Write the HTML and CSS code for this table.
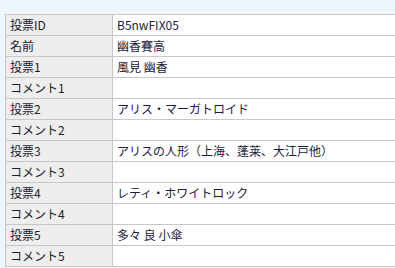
FILE: index.html
```html
<!DOCTYPE html>
<html>
<head>
 <meta charset="utf-8"/>
 <title>投票</title>
<link rel="stylesheet" href="styles.css">
</head>
<body>
<table class="vote">
<tr> <th>投票ID</th> <td>B5nwFIX05</td> </tr>
<tr> <th>名前</th> <td>幽香賽高</td> </tr>
<tr> <th>投票1</th> <td>風見 幽香</td> </tr>
<tr> <th>コメント1</th> <td></td> </tr>
<tr> <th>投票2</th> <td>アリス・マーガトロイド</td> </tr>
<tr> <th>コメント2</th> <td></td> </tr>
<tr> <th>投票3</th> <td>アリスの人形（上海、蓬莱、大江戸他）</td> </tr>
<tr> <th>コメント3</th> <td></td> </tr>
<tr> <th>投票4</th> <td>レティ・ホワイトロック</td> </tr>
<tr> <th>コメント4</th> <td></td> </tr>
<tr> <th>投票5</th> <td>多々 良 小傘</td> </tr>
<tr> <th>コメント5</th> <td></td> </tr>
</table>
</body>
</html>
```

FILE: styles.css
```css
html, body {
 margin:      0;
 padding:     0;
 background:  #eef6fd;
 overflow:    hidden;
}

body {
 padding: 14px 0 0 5px;
}

table.vote {
 width:           392px;
 border-collapse: collapse;
 font-family:     "Noto Sans CJK JP", "Noto Sans", sans-serif;
 font-size:       12px;
 color:           #1c1c3c;
}

table.vote th,
table.vote td {
 height:       20px;
 padding:      0 4px;
 border:       1px solid #c8c8c8;
 line-height:  20px;
 text-align:   left;
 font-weight:  normal;
 white-space:  nowrap;
}

table.vote th {
 width:       98px;
 background:  #eeeeee;
 color:       #1c1c2c;
}

table.vote td {
 background:  #ffffff;
}
```
